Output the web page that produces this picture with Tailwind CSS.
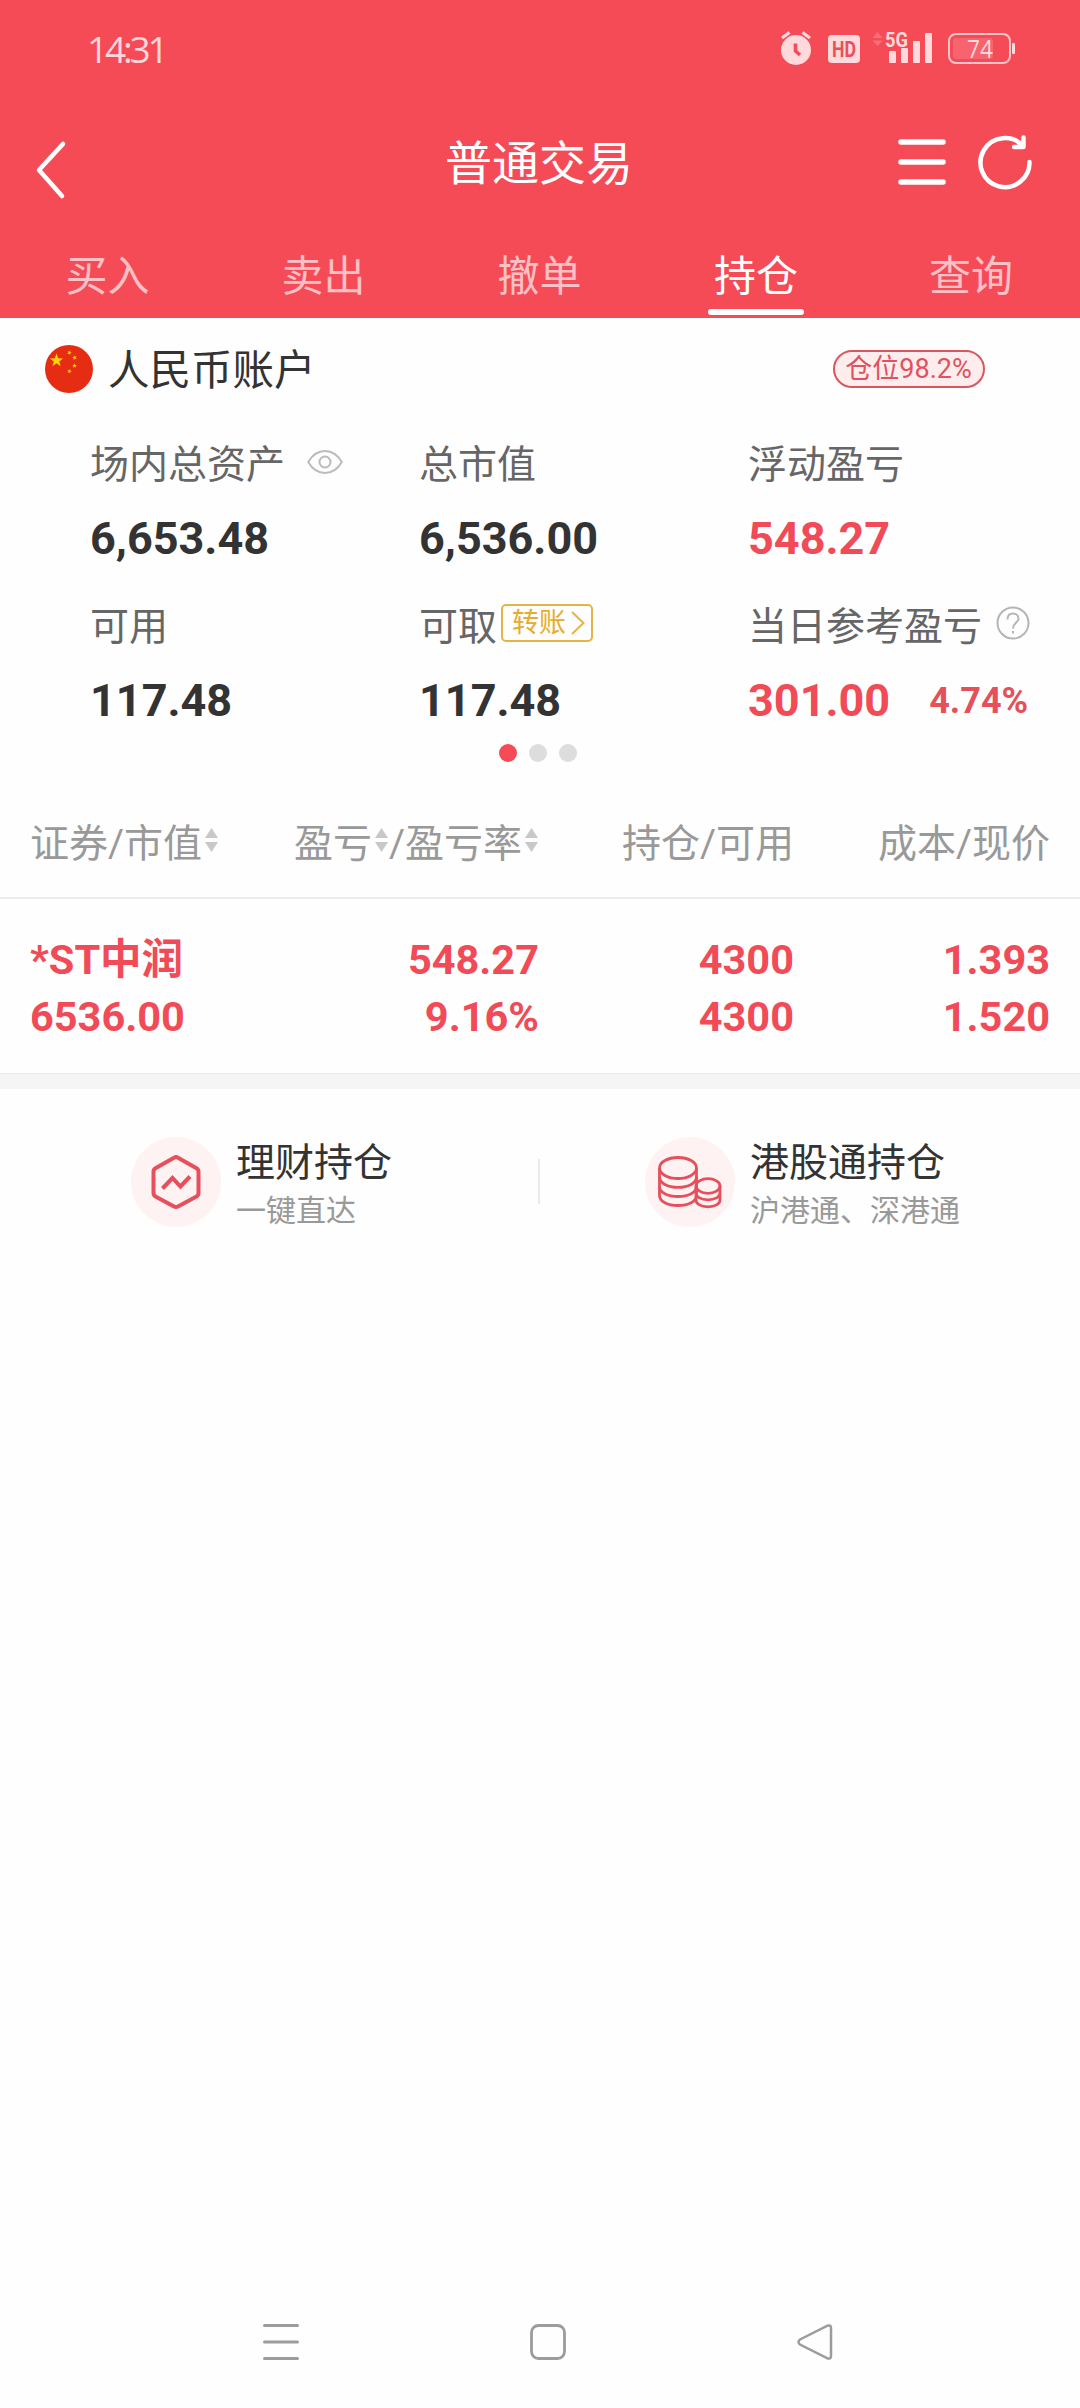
<!DOCTYPE html>
<html lang="zh-CN">
<head>
<meta charset="utf-8">
<title>普通交易</title>
<script src="https://cdn.jsdelivr.net/npm/@tailwindcss/browser@4"></script>
</head>
<body class="bg-white">
<div class="w-[1080px] h-[2408px] flex flex-col overflow-hidden bg-[#fefefe] font-[Roboto,'Noto_Sans_CJK_SC',sans-serif] text-[#333]">

  <header class="h-[318px] shrink-0 bg-[#f54b57] flex flex-col text-white">
    <!-- status bar -->
    <div class="h-[98px] flex items-center justify-between pl-[87px] pr-[64px]">
      <span class="text-[37px] leading-[40px] tracking-[-3.2px] text-[#ffd6d9] font-['Open_Sans',sans-serif] font-medium">14:31</span>
      <svg class="w-[240px] h-[40px]" viewBox="776 29 240 40" fill="#ffd9db">
        <circle cx="796" cy="50" r="15"/>
        <path d="M782 38l7.500-5.500M810 38l-7.500-5.500" stroke="#ffd9db" stroke-width="3.200" fill="none"/>
        <path d="M795.500 43.500v7.500l4.500 4" stroke="#f54b57" stroke-width="3.600" fill="none"/>
        <rect x="828" y="35" width="32" height="28" rx="4"/>
        <text x="832" y="57" font-family="Roboto" font-weight="700" font-size="22" textLength="24" lengthAdjust="spacingAndGlyphs" fill="#e8505b">HD</text>
        <path d="M872.500 38l5-6 5 6zM872.500 40.500h10l-5 5.500z" fill="#f86f78"/>
        <text x="885" y="46.500" font-family="Roboto" font-weight="700" font-size="21" textLength="23" lengthAdjust="spacingAndGlyphs">5G</text>
        <rect x="889" y="51" width="7" height="12" rx="1"/><rect x="901" y="48" width="7" height="15" rx="1"/><rect x="913" y="41" width="7" height="22" rx="1"/><rect x="925" y="33" width="7" height="30" rx="1"/>
        <rect x="949" y="34" width="61" height="29" rx="7" fill="none" stroke="#ffc4c8" stroke-width="2"/>
        <rect x="953" y="38" width="40" height="21" rx="3" fill="#f7636e"/>
        <rect x="1012" y="43" width="3" height="11" rx="1"/>
        <text x="967" y="58" font-family="Open Sans" font-size="25" textLength="26" lengthAdjust="spacingAndGlyphs">74</text>
      </svg>
    </div>
    <!-- title bar -->
    <div class="h-[128px] grid grid-cols-3 items-center">
      <svg class="w-[34px] h-[60px] ml-[34px] mt-[16px]" viewBox="34 140 34 60" fill="none" stroke="#fff" stroke-width="4.500" stroke-linecap="round" stroke-linejoin="round"><path d="M63 144L39 170L62 196"/></svg>
      <h1 class="pt-[4px] -ml-[2px] text-[47px] leading-[56px] font-normal text-center">普通交易</h1>
      <svg class="w-[140px] h-[60px] justify-self-end mr-[44px]" viewBox="896 132 140 60" fill="none" stroke="#fff" stroke-width="5.500" stroke-linecap="round" stroke-linejoin="round">
        <path d="M901 142H943M901 162H943M901 182H943"/>
        <path d="M1029.500 162A24.500 24.500 0 1 1 1023 146M1023.500 137.500V147H1014" stroke-width="4.500"/>
      </svg>
    </div>
    <nav class="flex-1 grid grid-cols-5 text-center text-[42px] leading-[48px] text-[#fcc0c5]">
      <span class="pt-[27px] -ml-[1px]">买入</span>
      <span class="pt-[27px] -ml-[1px]">卖出</span>
      <span class="pt-[27px] -ml-[1px]">撤单</span>
      <span class="pt-[27px] text-white flex flex-col items-center justify-between pb-[3px]">持仓<i class="block w-[96px] h-[6px] rounded-full bg-white"></i></span>
      <span class="pt-[27px] -ml-[2px]">查询</span>
    </nav>
  </header>

  <!-- account summary -->
  <section class="h-[462px] shrink-0 flex flex-col">
    <div class="h-[102px] flex items-center pl-[45px] pr-[95px]">
      <svg class="w-[48px] h-[48px]" viewBox="0 0 48 48">
        <circle cx="24" cy="24" r="24" fill="#e62c13"/>
        <g fill="#fcd20a">
          <path id="s" d="M11.500 8.500L13.150 13.300L18.200 13.400L14.200 16.400L15.650 21.200L11.500 18.350L7.350 21.200L8.800 16.400L4.800 13.400L9.850 13.300Z"/>
          <use href="#s" transform="translate(24.500 7.500) rotate(20) scale(.36) translate(-11.500 -15)"/>
          <use href="#s" transform="translate(29.500 12.500) rotate(-15) scale(.36) translate(-11.500 -15)"/>
          <use href="#s" transform="translate(29.500 20.500) scale(.36) translate(-11.500 -15)"/>
          <use href="#s" transform="translate(24.500 26) rotate(20) scale(.36) translate(-11.500 -15)"/>
        </g>
      </svg>
      <span class="ml-[15px] pt-[3px] text-[41.500px] leading-[48px]">人民币账户</span>
      <span class="ml-auto w-[152px] h-[38px] rounded-full border-2 border-[#d9575c] bg-[#ffeced] text-[#e0525d] text-[27px] leading-[35px] text-center pr-[1px]">仓位98.2%</span>
    </div>

    <div class="pl-[90px] grid grid-cols-[329px_329px_1fr] text-[39px] leading-[48px] text-[#666]">
      <div class="h-[162px] pt-[21px]">
        <div class="flex items-center h-[48px]">场内总资产
          <svg class="w-[36px] h-[26px] ml-[22px] -mt-[6px]" viewBox="0 0 36 26" fill="none" stroke="#bbb" stroke-width="2"><path d="M1.200 13C5 6.500 11 2 18 2S31 6.500 34.800 13C31 19.500 25 24 18 24S5 19.500 1.200 13Z"/><circle cx="18" cy="13" r="5.500"/></svg>
        </div>
        <div class="mt-[26px] font-bold text-[45px] text-[#333]">6,653.48</div>
      </div>
      <div class="h-[162px] pt-[21px]">
        <div>总市值</div>
        <div class="mt-[26px] font-bold text-[45px] text-[#333]">6,536.00</div>
      </div>
      <div class="h-[162px] pt-[21px]">
        <div>浮动盈亏</div>
        <div class="mt-[26px] font-bold text-[45px] text-[#f04b57]">548.27</div>
      </div>
      <div class="h-[162px] pt-[21px]">
        <div>可用</div>
        <div class="mt-[26px] font-bold text-[45px] text-[#333]">117.48</div>
      </div>
      <div class="h-[162px] pt-[21px]">
        <div class="flex items-center h-[48px]">可取
          <span class="ml-[4px] -mt-[8px] w-[92px] h-[38px] rounded-[5px] border-2 border-[#e8b345] flex items-center pl-[9px] text-[27px] leading-[34px] text-[#e6ac2c]">转账<svg class="w-[14px] h-[24px] ml-[5px]" viewBox="0 0 14 24" fill="none" stroke="#e8b345" stroke-width="2"><path d="M1 1L12.500 12L1 23"/></svg></span>
        </div>
        <div class="mt-[26px] font-bold text-[45px] text-[#333]">117.48</div>
      </div>
      <div class="h-[162px] pt-[21px]">
        <div class="flex items-center h-[48px]">当日参考盈亏
          <svg class="w-[34px] h-[34px] ml-[14px] -mt-[8px]" viewBox="0 0 34 34" fill="none" stroke="#b5b5b5" stroke-width="2"><circle cx="17" cy="17" r="15.500"/><path d="M11.500 13.500C11.500 9.500 13.800 7.500 17 7.500S22.500 9.800 22.500 12.700C22.500 16.500 17 16.800 17 22.500M17 25v2.500"/></svg>
        </div>
        <div class="mt-[26px] flex items-center h-[48px] font-bold text-[45px] text-[#f04b57]">301.00<span class="ml-[39px] text-[36px] text-[#e5505b]">4.74%</span></div>
      </div>
    </div>
    <div class="flex justify-center gap-[12px] pr-[4px]">
      <i class="w-[18px] h-[18px] rounded-full bg-[#f54b57]"></i>
      <i class="w-[18px] h-[18px] rounded-full bg-[#ddd]"></i>
      <i class="w-[18px] h-[18px] rounded-full bg-[#ddd]"></i>
    </div>
  </section>

  <!-- positions table -->
  <section class="shrink-0">
    <div class="h-[119px] border-b-2 border-[#ebebeb] pt-[40px] pl-[30px] pr-[30px] grid grid-cols-[220px_289px_255px_1fr] text-[39px] leading-[48px] text-[#999]">
      <div class="flex items-center h-[48px] whitespace-nowrap">证券/市值<svg class="w-[13px] h-[24px] ml-[3px] -mt-[8px]" viewBox="0 0 13 24" fill="#c8c8c8"><path d="M0 10L6.500 0L13 10zM0 14H13L6.500 24z"/></svg></div>
      <div class="flex items-center h-[48px] justify-end whitespace-nowrap">盈亏<svg class="w-[13px] h-[24px] ml-[3px] mr-[1px] -mt-[8px]" viewBox="0 0 13 24" fill="#c8c8c8"><path d="M0 10L6.500 0L13 10zM0 14H13L6.500 24z"/></svg>/盈亏率<svg class="w-[13px] h-[24px] ml-[3px] mr-[1px] -mt-[8px]" viewBox="0 0 13 24" fill="#c8c8c8"><path d="M0 10L6.500 0L13 10zM0 14H13L6.500 24z"/></svg></div>
      <div class="text-right">持仓/可用</div>
      <div class="text-right">成本/现价</div>
    </div>
    <div class="h-[174px] pt-[32px] pl-[30px] pr-[30px] grid grid-cols-[220px_289px_255px_1fr] content-start text-[41.500px] leading-[57px] font-bold text-[#f04b57]">
      <div class="h-[57px]">*ST中润</div>
      <div class="text-right">548.27</div>
      <div class="text-right">4300</div>
      <div class="text-right">1.393</div>
      <div>6536.00</div>
      <div class="text-right">9.16%</div>
      <div class="text-right">4300</div>
      <div class="text-right">1.520</div>
    </div>
    <div class="h-[16px] bg-[#f5f5f5] border-t border-[#e8e8e8]"></div>
  </section>

  <!-- shortcuts -->
  <section class="flex-1 flex items-start">
    <div class="w-[538px] flex pl-[131px] pt-[48px]">
      <svg class="w-[90px] h-[90px]" viewBox="0 0 90 90" fill="none" stroke="#e6505c" stroke-width="4" stroke-linejoin="round">
        <circle cx="45" cy="45" r="45" fill="#fff2f2" stroke="none"/>
        <path d="M43 20.700Q45 19.500 47 20.700L65.500 31.200Q67.500 32.400 67.500 34.700V56Q67.500 58.300 65.500 59.400L47 69.500Q45 70.600 43 69.500L24.500 59.400Q22.500 58.300 22.500 56V34.700Q22.500 32.400 24.500 31.200Z"/>
        <path d="M31.500 51.500L41.500 41L49.500 49.500L59 39.500" stroke-linejoin="miter"/>
      </svg>
      <div class="ml-[15px] pt-[2px]">
        <div class="text-[39px] leading-[48px]">理财持仓</div>
        <div class="mt-[6px] text-[30px] leading-[36px] text-[#999]">一键直达</div>
      </div>
    </div>
    <i class="mt-[70px] w-[2px] h-[45px] bg-[#ebebeb]"></i>
    <div class="flex pl-[105px] pt-[48px]">
      <svg class="w-[90px] h-[90px]" viewBox="0 0 90 90" fill="none" stroke="#e6505c" stroke-width="2.800">
        <circle cx="45" cy="45" r="45" fill="#fff2f2" stroke="none"/>
        <ellipse cx="33" cy="31" rx="18.500" ry="10.500"/>
        <path d="M14.500 31V58.500C14.500 64.500 22.500 68.500 33 68.500S51.500 64.500 51.500 58.500V31"/>
        <path d="M14.500 40C14.500 46 22.500 50.300 33 50.300S51.500 46 51.500 40M14.500 49.500C14.500 55.500 22.500 59.500 33 59.500S51.500 55.500 51.500 49.500"/>
        <ellipse cx="63" cy="49" rx="12" ry="7.300"/>
        <path d="M51 49V63C51 67 56 69.800 63 69.800S75 67 75 63V49M51 56C51 60 56 62.800 63 62.800S75 60 75 56"/>
      </svg>
      <div class="ml-[15px] pt-[2px]">
        <div class="text-[39px] leading-[48px]">港股通持仓</div>
        <div class="mt-[6px] text-[30px] leading-[36px] text-[#999]">沪港通、深港通</div>
      </div>
    </div>
  </section>

  <!-- system navigation -->
  <footer class="h-[132px] shrink-0 flex items-center justify-between pl-[263px] pr-[247px]">
    <svg class="w-[36px] h-[36px]" viewBox="0 0 36 36" stroke="#9c9c9c" stroke-width="3" stroke-linecap="round"><path d="M1.500 1.500H34.500M1.500 18H34.500M1.500 34.500H34.500"/></svg>
    <svg class="w-[36px] h-[36px]" viewBox="0 0 36 36" fill="none" stroke="#9c9c9c" stroke-width="2.800"><rect x="1.500" y="1.500" width="33" height="33" rx="7"/></svg>
    <svg class="w-[36px] h-[36px]" viewBox="0 0 36 36" fill="none" stroke="#9c9c9c" stroke-width="2.500"><path d="M3 15.500L30 1.800Q34 0.500 34 4V32Q34 35.500 30 34.200L3 20.500Q0 18 3 15.500Z"/></svg>
  </footer>
</div>
</body>
</html>
